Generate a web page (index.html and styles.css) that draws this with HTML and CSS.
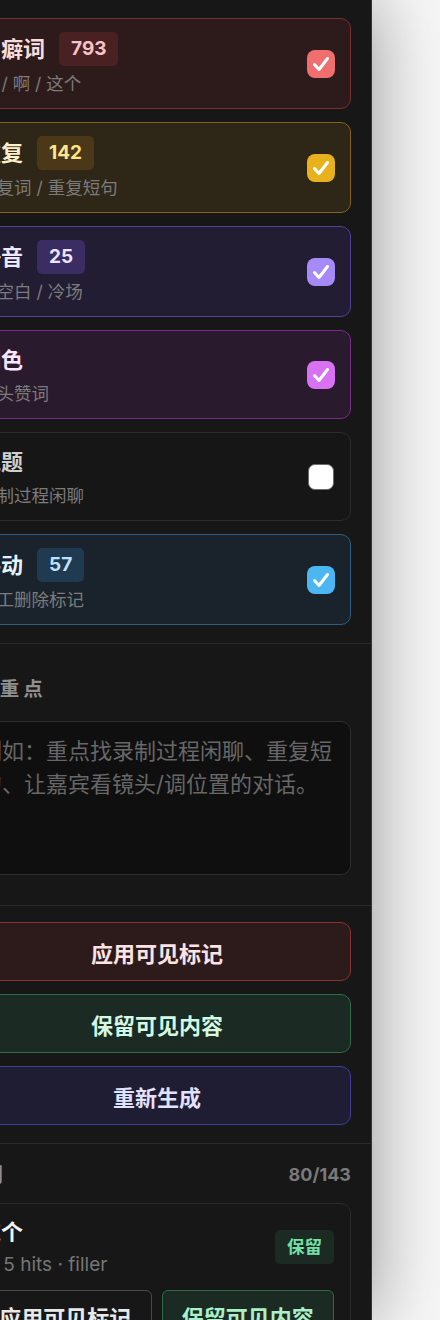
FILE: index.html
```html
<!DOCTYPE html>
<html lang="zh-CN">
<head>
    <meta charset="UTF-8">
    <meta name="viewport" content="width=device-width, initial-scale=1.0">
    <title>剪辑标记面板</title>
    <link rel="stylesheet" href="styles.css">
</head>
<body>

    <aside class="panel">

        <!-- Rule categories -->
        <section class="section rules">
            <div class="rule red">
                <div class="rule-text">
                    <div class="rule-head">
                        <span class="rule-name">口癖词</span>
                        <span class="rule-count">793</span>
                    </div>
                    <div class="rule-desc">嗯 / 啊 / 这个</div>
                </div>
                <span class="check"><svg viewBox="0 0 28 28"><path d="M7.5 14.5 L12 19.5 L20.5 8.5"/></svg></span>
            </div>

            <div class="rule amber">
                <div class="rule-text">
                    <div class="rule-head">
                        <span class="rule-name">重复</span>
                        <span class="rule-count">142</span>
                    </div>
                    <div class="rule-desc">重复词 / 重复短句</div>
                </div>
                <span class="check"><svg viewBox="0 0 28 28"><path d="M7.5 14.5 L12 19.5 L20.5 8.5"/></svg></span>
            </div>

            <div class="rule violet">
                <div class="rule-text">
                    <div class="rule-head">
                        <span class="rule-name">静音</span>
                        <span class="rule-count">25</span>
                    </div>
                    <div class="rule-desc">长空白 / 冷场</div>
                </div>
                <span class="check"><svg viewBox="0 0 28 28"><path d="M7.5 14.5 L12 19.5 L20.5 8.5"/></svg></span>
            </div>

            <div class="rule fuchsia">
                <div class="rule-text">
                    <div class="rule-head">
                        <span class="rule-name">润色</span>
                    </div>
                    <div class="rule-desc">口头赞词</div>
                </div>
                <span class="check"><svg viewBox="0 0 28 28"><path d="M7.5 14.5 L12 19.5 L20.5 8.5"/></svg></span>
            </div>

            <div class="rule plain">
                <div class="rule-text">
                    <div class="rule-head">
                        <span class="rule-name">跑题</span>
                    </div>
                    <div class="rule-desc">录制过程闲聊</div>
                </div>
                <span class="check off"></span>
            </div>

            <div class="rule sky">
                <div class="rule-text">
                    <div class="rule-head">
                        <span class="rule-name">手动</span>
                        <span class="rule-count">57</span>
                    </div>
                    <div class="rule-desc">人工删除标记</div>
                </div>
                <span class="check"><svg viewBox="0 0 28 28"><path d="M7.5 14.5 L12 19.5 L20.5 8.5"/></svg></span>
            </div>
        </section>

        <!-- Focus prompt -->
        <section class="section focus">
            <div class="section-label">AI 重点</div>
            <textarea class="focus-input" placeholder="例如：重点找录制过程闲聊、重复短句、让嘉宾看镜头/调位置的对话。"></textarea>
        </section>

        <!-- Actions -->
        <section class="section actions">
            <button class="btn btn-red">应用可见标记</button>
            <button class="btn btn-green">保留可见内容</button>
            <button class="btn btn-indigo">重新生成</button>
        </section>

        <!-- Hit list -->
        <section class="section hits">
            <div class="hits-head">
                <span class="section-label">规则</span>
                <span class="hits-total">80/143</span>
            </div>

            <div class="hit">
                <div class="hit-top">
                    <div>
                        <div class="hit-word">这个</div>
                        <div class="hit-meta">共 5 hits · filler</div>
                    </div>
                    <span class="tag-keep">保留</span>
                </div>
                <div class="hit-actions">
                    <button class="btn btn-small">应用可见标记</button>
                    <button class="btn btn-small btn-green">保留可见内容</button>
                </div>
            </div>
        </section>

    </aside>

</body>
</html>
```

FILE: styles.css
```css
* {
    box-sizing: border-box;
}

body {
    margin: 0;
    height: 1320px;
    overflow: hidden;
    background-color: #f6f6f6;
    font-family: "Inter", "Noto Sans CJK SC", sans-serif;
    display: flex;
}

.panel {
    flex: none;
    width: 430px;
    margin-left: -58px;
    min-height: 1320px;
    background-color: #171717;
    border-right: 1px solid #353535;
    box-shadow: 0 0 70px rgba(0, 0, 0, 0.4);
}

.section {
    padding: 0 20px 0 21px;
}

.section + .section {
    border-top: 1px solid #2a2a2a;
}

/* rule cards */
.rules {
    display: flex;
    flex-direction: column;
    gap: 13px;
    padding-top: 18px;
    padding-bottom: 18px;
}

.rule {
    display: flex;
    align-items: center;
    justify-content: space-between;
    padding: 13px 15px;
    border: 1px solid #2b2b2b;
    border-radius: 10px;
    background-color: #161616;
}

.rule-head {
    display: flex;
    align-items: center;
    gap: 14px;
    min-height: 32px;
}

.rule-name {
    font-size: 22px;
    font-weight: 700;
    line-height: 32px;
    color: #cfcfcf;
}

.rule-count {
    padding: 6px 12px;
    border-radius: 5px;
    font-size: 19px;
    font-weight: 700;
    line-height: 22px;
}

.rule-desc {
    margin-top: 6px;
    font-size: 17.5px;
    line-height: 23px;
    color: #7b7b7b;
}

.check {
    flex: none;
    width: 28px;
    height: 28px;
    border-radius: 8px;
    display: flex;
}

.check svg {
    width: 28px;
    height: 28px;
    fill: none;
    stroke: #fff;
    stroke-width: 3;
    stroke-linecap: round;
    stroke-linejoin: round;
}

.check.off {
    width: 26px;
    height: 26px;
    margin-right: 1px;
    background-color: #fff;
    border: 1.5px solid #6b6b6b;
    border-radius: 7px;
}

.rule.red { background-color: #2d1b1c; border-color: #7a2e2f; }
.rule.red .rule-name { color: #f7dcdc; }
.rule.red .rule-count { background-color: #4a2123; color: #f6c4c4; }
.rule.red .check { background-color: #ef6f6f; }

.rule.amber { background-color: #2e2616; border-color: #87601a; }
.rule.amber .rule-name { color: #fff0cc; }
.rule.amber .rule-count { background-color: #4a3818; color: #fce58b; }
.rule.amber .check { background-color: #e8b21e; }

.rule.violet { background-color: #231d33; border-color: #52409a; }
.rule.violet .rule-name { color: #eee9ff; }
.rule.violet .rule-count { background-color: #3a2d63; color: #ebe5ff; }
.rule.violet .check { background-color: #a68af8; }

.rule.fuchsia { background-color: #2a1a2d; border-color: #7b2c8a; }
.rule.fuchsia .rule-name { color: #fbe6ff; }
.rule.fuchsia .check { background-color: #d872f2; }

.rule.sky { background-color: #1a232c; border-color: #2a5e84; }
.rule.sky .rule-name { color: #e4f3ff; }
.rule.sky .rule-count { background-color: #1f3a51; color: #bde3ff; }
.rule.sky .check { background-color: #4bb6f2; }

/* focus prompt */
.focus {
    padding-top: 33px;
    padding-bottom: 30px;
}

.section-label {
    display: block;
    font-size: 19.5px;
    font-weight: 700;
    line-height: 24px;
    letter-spacing: 4px;
    color: #8f8f8f;
}

.focus .section-label {
    margin-bottom: 20px;
}

.focus-input {
    display: block;
    width: 100%;
    height: 154px;
    padding: 13px 16px;
    resize: none;
    border: 1px solid #2d2d2d;
    border-radius: 10px;
    background-color: #0f0f0f;
    color: #ddd;
    font-family: inherit;
    font-size: 22px;
    line-height: 33px;
    outline: none;
}

.focus-input::placeholder {
    color: #676767;
}

/* action buttons */
.actions {
    display: flex;
    flex-direction: column;
    gap: 13px;
    padding-top: 16px;
    padding-bottom: 18px;
}

.btn {
    height: 59px;
    border: 1px solid #444;
    border-radius: 10px;
    background-color: #171717;
    color: #e8e8e8;
    font-family: inherit;
    font-size: 22px;
    font-weight: 700;
    cursor: pointer;
}

.btn-red {
    background-color: #2d1b1c;
    border-color: #8a3232;
    color: #fde3e3;
}

.btn-green {
    background-color: #1b2a22;
    border-color: #2f6b4a;
    color: #d3f8e4;
}

.btn-indigo {
    background-color: #1f1d33;
    border-color: #433d99;
    color: #e2e2ff;
}

/* hit list */
.hits {
    padding-top: 19px;
}

.hits-head {
    display: flex;
    justify-content: space-between;
    align-items: center;
    margin-bottom: 16px;
}

.hits .section-label {
    letter-spacing: 1px;
}

.hits-total {
    font-size: 18px;
    font-weight: 700;
    line-height: 24px;
    color: #7a7a7a;
}

.hit {
    padding: 13px 16px 16px 15px;
    border: 1px solid #2b2b2b;
    border-radius: 10px;
}

.hit-top {
    display: flex;
    justify-content: space-between;
    align-items: center;
}

.hit-word {
    font-size: 22px;
    font-weight: 700;
    line-height: 30px;
    color: #f2f2f2;
}

.hit-meta {
    margin-top: 6px;
    font-size: 19px;
    line-height: 24px;
    color: #767676;
}

.tag-keep {
    padding: 0 12px;
    border-radius: 5px;
    background-color: #1b2a22;
    color: #74e0a6;
    font-size: 17.5px;
    font-weight: 700;
    line-height: 34px;
}

.hit-actions {
    display: grid;
    grid-template-columns: 1fr 1fr;
    gap: 10px;
    margin-top: 13px;
}

.btn-small {
    height: 52px;
    border-color: #4a4a4a;
    border-radius: 6px;
}

.btn-small.btn-green {
    color: #a9f0c8;
    border-color: #2f6b4a;
}
```
